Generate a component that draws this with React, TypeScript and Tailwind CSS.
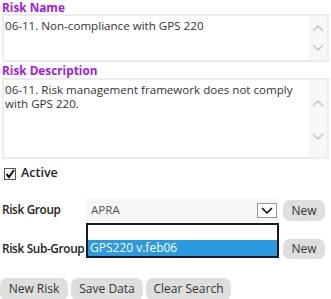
import React from 'react';

function Chevron({ dir, className }: { dir: 'up' | 'down'; className?: string }) {
  return (
    <svg width="12" height="8" viewBox="0 0 12 8" className={className} fill="none" stroke="currentColor" strokeWidth="1.5">
      {dir === 'up' ? <polyline points="1,7 6,2 11,7" /> : <polyline points="1,1 6,6 11,1" />}
    </svg>
  );
}

function FakeTextArea({ lines, height, upTop, downTop }: { lines: string[]; height: string; upTop: string; downTop: string }) {
  return (
    <div className={`relative mx-[2px] border-2 border-[#ececec] bg-white ${height}`}>
      <div className="pl-[1px] pt-[3px] pr-6 text-[11.6px] leading-[14px] text-[#333]">
        {lines.map((l, i) => (
          <div key={i} className="whitespace-nowrap">{l}</div>
        ))}
      </div>
      <div className="absolute right-0 top-0 bottom-0 w-[18px] bg-[#f7f7f7]">
        <Chevron dir="up" className={`absolute left-[3px] text-[#c4c4c4] ${upTop}`} />
        <Chevron dir="down" className={`absolute left-[3px] text-[#c4c4c4] ${downTop}`} />
      </div>
    </div>
  );
}

export default function App() {
  return (
    <div className="w-[331px] h-[299px] overflow-hidden bg-white text-[11.6px] text-[#222]" style={{ fontFamily: '"Open Sans", "Noto Sans", sans-serif' }}>
      {/* Risk name */}
      <div className="pl-[2px] h-[14px] leading-[15px] text-[11.8px] font-bold text-[#a020e0] whitespace-nowrap">Risk Name</div>
      <FakeTextArea lines={['06-11. Non-compliance with GPS 220']} height="h-[48px]" upTop="top-[8px]" downTop="top-[28px]" />

      {/* Risk description */}
      <div className="pl-[2px] mt-[1px] h-[15px] leading-[15px] text-[11.8px] font-bold text-[#a020e0]">Risk Description</div>
      <FakeTextArea
        lines={['06-11. Risk management framework does not comply', 'with GPS 220.']}
        height="h-[81px]"
        upTop="top-[19px]"
        downTop="top-[53px]"
      />

      {/* Active */}
      <div className="flex items-center gap-[5px] pl-[4px] mt-[8px] h-[13px]">
        <div className="w-[12px] h-[12px] border border-[#555] bg-white flex items-center justify-center">
          <svg width="10" height="10" viewBox="0 0 10 10" fill="none" stroke="#111" strokeWidth="2">
            <polyline points="1.5,5 4,8 9,1" />
          </svg>
        </div>
        <span className="font-semibold text-[12.5px]">Active</span>
      </div>

      {/* Risk group */}
      <div className="relative flex items-center mt-[19px] h-[22px]">
        <div className="w-[86px] pl-[2px] font-semibold text-[11.8px] tracking-[-0.35px] whitespace-nowrap">Risk Group</div>
        <div className="relative w-[192px] h-[22px] bg-[#f6f6f6] flex items-center pl-[5px] text-[#555]">
          APRA
          <div className="absolute right-[1px] top-[4px] w-[20px] h-[15px] border border-[#999] bg-white flex items-center justify-center text-black">
            <Chevron dir="down" />
          </div>
          {/* open listbox */}
          <div className="absolute left-0 top-[24px] w-[193px] h-[35px] border-2 border-[#1a1a1a] bg-white z-10 flex flex-col justify-end">
            <div className="h-[16px] bg-[#2b9ae0] text-white leading-[16px] pl-[2px] text-[12px]">GPS220 v.feb06</div>
          </div>
        </div>
        <button className="ml-[5px] w-[42px] h-[21px] rounded-[7px] bg-[#dedede] text-[#333] text-[12px] leading-[21px]">New</button>
      </div>

      {/* Risk sub-group */}
      <div className="flex items-center mt-[18px] h-[20px]">
        <div className="w-[86px] pl-[2px] font-semibold text-[11.8px] tracking-[-0.35px] whitespace-nowrap">Risk Sub-Group</div>
        <div className="w-[192px]" />
        <button className="ml-[5px] w-[42px] h-[20px] rounded-[7px] bg-[#dedede] text-[#333] text-[12px] leading-[20px]">New</button>
      </div>

      {/* Action buttons */}
      <div className="flex gap-[3px] mt-[19px]">
        <button className="h-[22px] w-[68px] rounded-[7px] bg-[#dedede] text-[#333] text-[12px]">New Risk</button>
        <button className="h-[22px] w-[72px] rounded-[7px] bg-[#dedede] text-[#333] text-[12px]">Save Data</button>
        <button className="h-[22px] w-[85px] rounded-[7px] bg-[#dedede] text-[#333] text-[12px]">Clear Search</button>
      </div>
    </div>
  );
}
